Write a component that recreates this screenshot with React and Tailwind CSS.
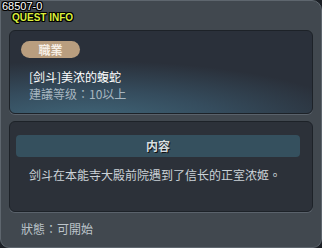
import React from "react";

const outline =
  "[text-shadow:1px_0_0_#000,-1px_0_0_#000,0_1px_0_#000,0_-1px_0_#000,1px_1px_0_#000,-1px_-1px_0_#000,1px_-1px_0_#000,-1px_1px_0_#000]";

export default function App() {
  return (
    <div className="w-[322px] h-[248px] bg-[#1c2026]">
      <div className="relative flex flex-col w-full h-full bg-[#41484f] border border-[#5e666e] rounded-tr-[10px] rounded-b-[9px] font-['Noto_Sans_CJK_TC','Noto_Sans_CJK_SC',sans-serif]">
        {/* Title */}
        <div className="h-[29px] relative">
          <div className={`absolute left-[1px] top-0 text-[11px] leading-[11px] text-white font-['Liberation_Sans',sans-serif] ${outline}`}>
            68507-0
          </div>
          <div className={`absolute left-[11px] top-[11px] text-[10px] leading-[11px] font-bold text-[#dcef3c] font-['Liberation_Sans',sans-serif] ${outline}`}>
            QUEST INFO
          </div>
        </div>

        {/* Job panel */}
        <div className="mx-[8px] h-[84px] rounded-[6px] border border-[#1d2228] shadow-[0_1px_0_#5a626b] bg-[radial-gradient(ellipse_110%_90%_at_25%_110%,#41677a_0%,#354c5d_42%,#2a303a_82%)] px-[11px] pt-[10px]">
          <div className="w-[59px] h-[17px] rounded-full bg-[#b99e7f] flex items-center justify-center text-[12px] leading-none font-bold text-[#f6efe6]">
            職業
          </div>
          <div className="pl-[8px] mt-[10px] text-[12px] leading-[17px] text-white">
            [剑斗]美浓的蝮蛇
          </div>
          <div className="pl-[8px] text-[12px] leading-[17px] text-[#a7b6c0]">
            建議等级：10以上
          </div>
        </div>

        {/* Content panel */}
        <div className="mx-[8px] mt-[7px] h-[91px] rounded-[6px] border border-[#1d2228] shadow-[0_1px_0_#5a626b] bg-[#2c3139] pl-[6px] pr-[12px] pt-[13px]">
          <div className="h-[22px] rounded-[4px] bg-[#35505e] flex items-center justify-center text-[12px] font-bold text-[#d6dde0] [text-shadow:1px_1px_0_#111]">
            内容
          </div>
          <div className="pl-[13px] mt-[9px] text-[12px] leading-[17px] text-[#cbd3d8] whitespace-nowrap">
            剑斗在本能寺大殿前院遇到了信长的正室浓姬。
          </div>
        </div>

        {/* Status */}
        <div className="pl-[20px] mt-[8px] text-[12px] leading-[17px] text-[#bcc4ca]">
          狀態：可開始
        </div>
      </div>
    </div>
  );
}
